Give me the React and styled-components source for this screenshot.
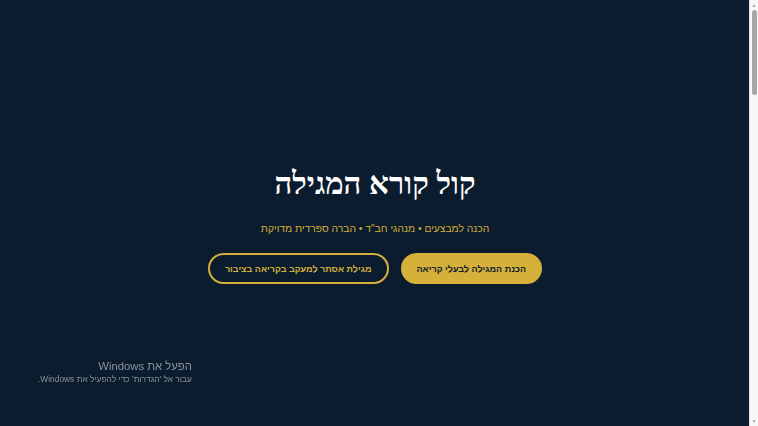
import styled, { createGlobalStyle } from 'styled-components';

const GlobalStyle = createGlobalStyle`
  html, body {
    margin: 0;
    padding: 0;
    background: #0c1c2f;
  }
  body {
    font-family: "Liberation Sans", "DejaVu Sans", sans-serif;
    direction: rtl;
    overflow-x: hidden;
  }
`;

const Page = styled.div`
  background: #0c1c2f;
  min-height: 2030px;
  margin-right: 8px;
`;

const Hero = styled.section`
  height: 426px;
  box-sizing: border-box;
  padding-top: 166px;
  display: flex;
  flex-direction: column;
  align-items: center;
`;

const Title = styled.h1`
  margin: 0;
  font-family: "Liberation Serif", "DejaVu Serif", serif;
  font-weight: 700;
  font-size: 31px;
  line-height: 36px;
  color: #ffffff;
`;

const Subtitle = styled.p`
  margin: 20px 0 0;
  font-size: 10.3px;
  line-height: 14px;
  color: #d4af37;
`;

const Actions = styled.div`
  margin-top: 17px;
  display: flex;
  gap: 12px;
`;

const Button = styled.a`
  box-sizing: border-box;
  height: 31px;
  padding: 0 ${(p) => (p.$outline ? '15px' : '14px')};
  display: inline-flex;
  align-items: center;
  border-radius: 999px;
  font-size: 9px;
  font-weight: 700;
  text-decoration: none;
  cursor: pointer;
  background: ${(p) => (p.$outline ? 'transparent' : '#d6b13a')};
  color: ${(p) => (p.$outline ? '#d6b13a' : '#0c1c2f')};
  border: 2px solid #d6b13a;
`;

/* the browser scrollbar seen in the screenshot */
const Scrollbar = styled.div`
  position: fixed;
  top: 0;
  right: 0;
  bottom: 0;
  width: 8px;
  background: #f7f7f7;
  border-left: 1px solid #e4e4e4;
  display: flex;
  flex-direction: column;
  align-items: center;
  direction: ltr;
`;

const Arrow = styled.div`
  height: 10px;
  font-size: 5px;
  line-height: 10px;
  color: #a3a3a3;
  margin-top: ${(p) => (p.$down ? 'auto' : '0')};
`;

const Thumb = styled.div`
  width: 5px;
  height: 85px;
  border-radius: 3px;
  background: #a6a6a6;
`;

const Watermark = styled.div`
  position: fixed;
  left: 38px;
  bottom: 41px;
  text-align: right;
  color: #8b929b;
  pointer-events: none;
`;

const WatermarkTitle = styled.div`
  font-size: 11.3px;
  line-height: 14px;
`;

const WatermarkText = styled.div`
  font-size: 8.4px;
  line-height: 12px;
`;

export default function App() {
  return (
    <Page>
      <GlobalStyle />
      <Hero>
        <Title>קול קורא המגילה</Title>
        <Subtitle>הכנה למבצעים • מנהגי חב"ד • הברה ספרדית מדויקת</Subtitle>
        <Actions>
          <Button>הכנת המגילה לבעלי קריאה</Button>
          <Button $outline>מגילת אסתר למעקב בקריאה בציבור</Button>
        </Actions>
      </Hero>
      <Watermark>
        <WatermarkTitle>הפעל את Windows</WatermarkTitle>
        <WatermarkText>עבור אל 'הגדרות' כדי להפעיל את Windows.</WatermarkText>
      </Watermark>
      <Scrollbar>
        <Arrow>▲</Arrow>
        <Thumb />
        <Arrow $down>▼</Arrow>
      </Scrollbar>
    </Page>
  );
}
